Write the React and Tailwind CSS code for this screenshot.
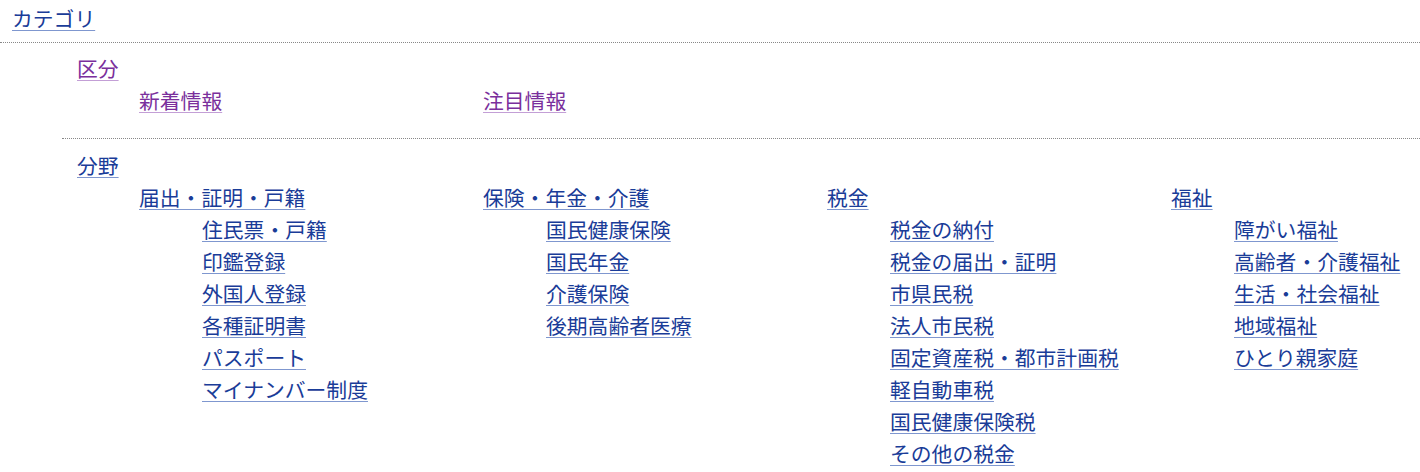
import React from "react";

const font = { fontFamily: '"Noto Sans CJK JP", "Noto Sans", sans-serif' };

const fields = [
  {
    name: "届出・証明・戸籍",
    items: ["住民票・戸籍", "印鑑登録", "外国人登録", "各種証明書", "パスポート", "マイナンバー制度"],
  },
  {
    name: "保険・年金・介護",
    items: ["国民健康保険", "国民年金", "介護保険", "後期高齢者医療"],
  },
  {
    name: "税金",
    items: [
      "税金の納付",
      "税金の届出・証明",
      "市県民税",
      "法人市民税",
      "固定資産税・都市計画税",
      "軽自動車税",
      "国民健康保険税",
      "その他の税金",
    ],
  },
  {
    name: "福祉",
    items: ["障がい福祉", "高齢者・介護福祉", "生活・社会福祉", "地域福祉", "ひとり親家庭"],
  },
];

const link = "underline decoration-1 underline-offset-[3px]";
const blue = `${link} text-[#1a3c98] decoration-[#7f97cf]`;
const purple = `${link} text-[#7a2f9c] decoration-[#c39fd6]`;

const App = () => {
  return (
    <div className="bg-white w-[1420px] h-[472px] overflow-hidden text-[20.8px] leading-[32px]" style={font}>
      <div className="pl-[12px] pt-[2px] pb-[8px] border-b border-dotted border-[#888]">
        <a href="#" className={blue}>カテゴリ</a>
      </div>

      <div className="ml-[62px] pt-[9px] pb-[22px] border-b border-dotted border-[#888]">
        <div className="pl-[15px]">
          <a href="#" className={purple}>区分</a>
        </div>
        <div className="pl-[77px] flex">
          <div className="w-[344px]">
            <a href="#" className={purple}>新着情報</a>
          </div>
          <div className="w-[344px]">
            <a href="#" className={purple}>注目情報</a>
          </div>
        </div>
      </div>

      <div className="ml-[62px] pt-[10px]">
        <div className="pl-[15px]">
          <a href="#" className={blue}>分野</a>
        </div>
        <div className="pl-[77px] flex items-start">
          {fields.map((f) => (
            <div key={f.name} className="w-[344px] shrink-0">
              <a href="#" className={blue}>{f.name}</a>
              <ul className="pl-[63px]">
                {f.items.map((it) => (
                  <li key={it}>
                    <a href="#" className={blue}>{it}</a>
                  </li>
                ))}
              </ul>
            </div>
          ))}
        </div>
      </div>
    </div>
  );
};

export default App;
